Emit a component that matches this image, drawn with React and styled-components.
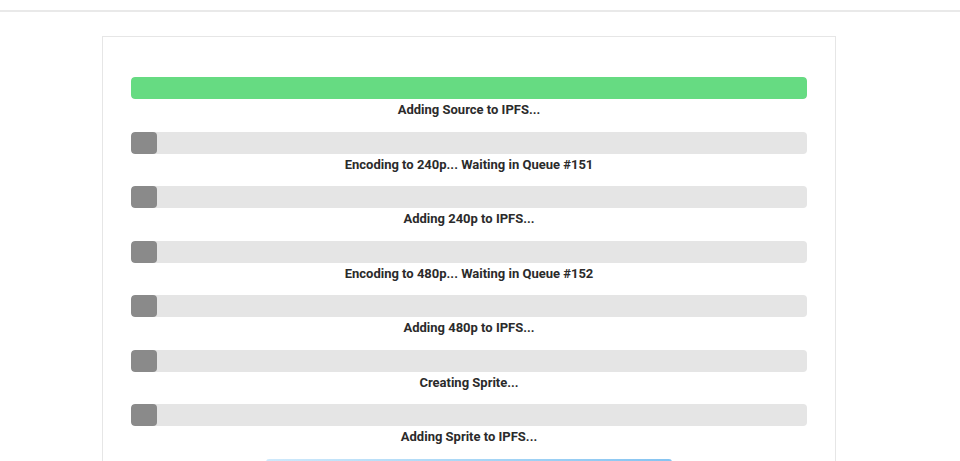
import React from 'react'
import styled, { createGlobalStyle } from 'styled-components'

const GlobalStyle = createGlobalStyle`
  html, body {
    margin: 0;
    padding: 0;
    background: #ffffff;
    font-family: Roboto, "Liberation Sans", sans-serif;
  }
`

const steps = [
  { label: 'Adding Source to IPFS...', done: true },
  { label: 'Encoding to 240p... Waiting in Queue #151' },
  { label: 'Adding 240p to IPFS...' },
  { label: 'Encoding to 480p... Waiting in Queue #152' },
  { label: 'Adding 480p to IPFS...' },
  { label: 'Creating Sprite...' },
  { label: 'Adding Sprite to IPFS...' },
]

function App() {
  return (
    <Page>
      <GlobalStyle />
      <TopBar />
      <Card>
        {steps.map((s) => (
          <Step key={s.label}>
            <Track>
              <Fill $done={s.done} />
            </Track>
            <Label>{s.label}</Label>
          </Step>
        ))}
        <Footer>
          <BlueButton />
        </Footer>
      </Card>
    </Page>
  )
}
export default App

const Page = styled.div`
  width: 960px;
  height: 461px;
  overflow: hidden;
`

const TopBar = styled.div`
  height: 10px;
  border-bottom: 2px solid #e9e9e9;
`

const Card = styled.div`
  margin: 24px 0 0 102px;
  width: 734px;
  border: 1px solid #e6e6e6;
  padding: 40px 28px 0 28px;
  box-sizing: border-box;
  height: 500px;
`

const Step = styled.div`
  display: flex;
  flex-direction: column;
  margin-bottom: 12px;
  &:nth-child(even) {
    margin-bottom: 11px;
  }
`

const Track = styled.div`
  height: 22px;
  width: 676px;
  background: #e5e5e5;
  border-radius: 4px;
  overflow: hidden;
`

const Fill = styled.div`
  height: 100%;
  width: ${(p) => (p.$done ? '100%' : '26px')};
  background: ${(p) => (p.$done ? '#66db82' : '#8a8a8a')};
  border-radius: 4px;
`

const Label = styled.div`
  width: 676px;
  text-align: center;
  font-size: 13px;
  font-weight: 700;
  line-height: 20px;
  padding-top: 1px;
  color: #2b2b2b;
`

const Footer = styled.div`
  width: 676px;
  display: flex;
  justify-content: center;
`

const BlueButton = styled.div`
  width: 406px;
  height: 40px;
  border-radius: 3px;
  background: linear-gradient(90deg, #cfe9fb 0%, #a9d7f6 50%, #86c4f1 100%);
`
